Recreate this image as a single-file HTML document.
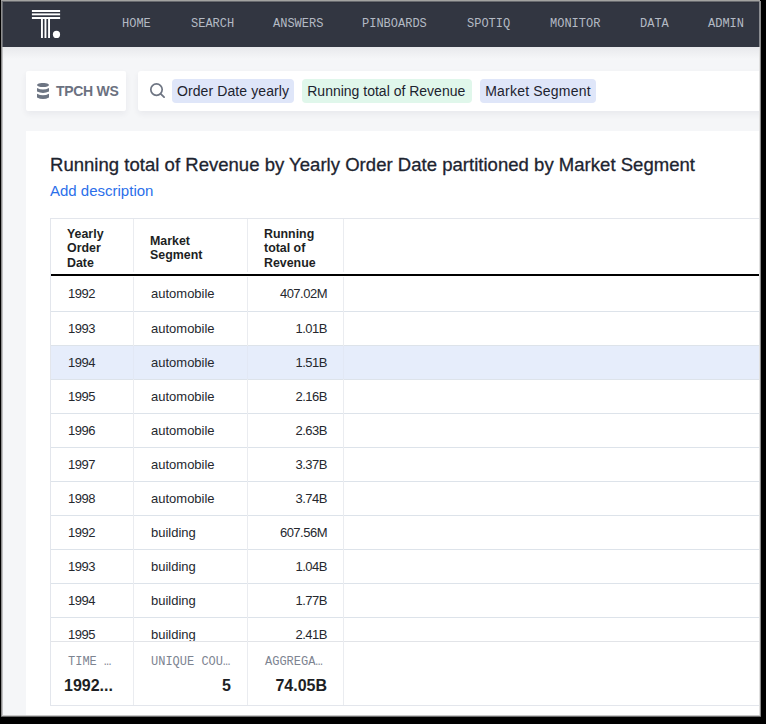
<!DOCTYPE html>
<html><head><meta charset="utf-8">
<style>
*{margin:0;padding:0;box-sizing:border-box}
html,body{width:766px;height:724px;overflow:hidden;background:#000}
body{position:relative;font-family:"Liberation Sans",sans-serif;color:#1d232f}
.abs{position:absolute}
#screen{position:absolute;left:1px;top:0;width:760px;height:717px;background:#a3a3a3;overflow:hidden}
#inner{position:absolute;left:1px;top:2px;width:757px;height:713px;background:#f5f6f8;overflow:hidden}
#nav{position:absolute;left:0;top:0;width:757px;height:44px;background:#323640}
.nv{position:absolute;top:15px;font-family:"Liberation Mono",monospace;font-size:12px;color:#b4bac4;letter-spacing:0px;line-height:14px}
.box{position:absolute;background:#fff;border-radius:2px;box-shadow:0 3px 6px rgba(30,40,60,.06)}
.tok{position:absolute;top:79px;height:24px;border-radius:4px;font-size:14px;line-height:24px;padding:0;text-align:center;color:#1d232f;white-space:nowrap}
#card{position:absolute;left:26px;top:131px;width:740px;height:600px;background:#fff}
table{border-collapse:collapse}
.grid{position:absolute;left:50px;top:218px;width:712px;height:488px;border:1px solid #e3e6ec;overflow:hidden;background:#fff}
.hdr{position:absolute;font-size:12.4px;font-weight:bold;line-height:14.6px;color:#1d1f24}
.cell{position:absolute;font-size:13px;color:#25282e;line-height:16px;white-space:nowrap}
.num{letter-spacing:-0.5px}
.hl{position:absolute;height:1px;background:#dde3ea}
.ft{position:absolute;top:655px;font-family:"Liberation Mono",monospace;font-size:12px;line-height:14px;color:#7d8491;white-space:nowrap}
.fv{position:absolute;top:677px;font-size:16px;font-weight:bold;line-height:18px;color:#1d1f24;white-space:nowrap}
.vl{position:absolute;width:1px;background:#eaecf0}
</style></head><body>
<div id="screen"><div id="inner"></div></div>

<!-- nav -->
<div class="abs" style="left:2px;top:2px;width:757px;height:45px;background:#323641"></div>
<div class="abs" style="left:2px;top:47px;width:757px;height:12px;background:linear-gradient(#e8e9ec,#f5f6f8)"></div>
<svg class="abs" style="left:31px;top:9px" width="30" height="30" viewBox="0 0 30 30">
  <rect x="0.9" y="1" width="28.2" height="2" fill="#fff"/>
  <rect x="0.9" y="4.4" width="28.2" height="1.9" fill="#fff"/>
  <rect x="0.9" y="8" width="28.2" height="2" fill="#fff"/>
  <rect x="10" y="9" width="1.9" height="20" fill="#fff"/>
  <rect x="13.5" y="9" width="1.9" height="20" fill="#fff"/>
  <rect x="17.1" y="9" width="1.9" height="20" fill="#fff"/>
  <circle cx="25.5" cy="25.4" r="3.6" fill="#fff"/>
</svg>
<div class="nv" style="left:122px;top:17px">HOME</div>
<div class="nv" style="left:191px;top:17px">SEARCH</div>
<div class="nv" style="left:273px;top:17px">ANSWERS</div>
<div class="nv" style="left:362px;top:17px">PINBOARDS</div>
<div class="nv" style="left:467px;top:17px">SPOTIQ</div>
<div class="nv" style="left:550px;top:17px">MONITOR</div>
<div class="nv" style="left:640px;top:17px">DATA</div>
<div class="nv" style="left:708px;top:17px">ADMIN</div>

<!-- source box -->
<div class="box" style="left:26px;top:71px;width:100px;height:40px"></div>
<svg class="abs" style="left:37px;top:83px" width="12" height="17" viewBox="0 0 12 17">
  <ellipse cx="6" cy="2" rx="6" ry="2.05" fill="#6d7583"/>
  <path d="M0 5 Q6 8 12 5 V8.6 Q6 11.2 0 8.6Z" fill="#6d7583"/>
  <path d="M0 10.8 Q6 13.8 12 10.8 V14.4 Q6 17.4 0 14.4Z" fill="#6d7583"/>
</svg>
<div class="abs" style="left:56px;top:83px;font-size:14px;font-weight:bold;color:#6b7180;line-height:16px;letter-spacing:-0.3px">TPCH WS</div>

<!-- search box -->
<div class="box" style="left:138px;top:71px;width:630px;height:40px;border-radius:3px 0 0 3px"></div>
<svg class="abs" style="left:149px;top:82px" width="18" height="18" viewBox="0 0 18 18">
  <circle cx="7.5" cy="7.6" r="5.7" fill="none" stroke="#6e7583" stroke-width="1.7"/>
  <line x1="11.7" y1="11.8" x2="15.1" y2="15.1" stroke="#6e7583" stroke-width="1.8" stroke-linecap="round"/>
</svg>
<div class="tok" style="left:172px;width:122px;letter-spacing:0.1px;background:#dfe6f9">Order Date yearly</div>
<div class="tok" style="left:302px;width:170px;padding-right:1.5px;background:#e0f7eb">Running total of Revenue</div>
<div class="tok" style="left:480px;width:116px;letter-spacing:0.2px;background:#dfe6f9">Market Segment</div>

<!-- card -->
<div class="abs" style="left:26px;top:131px;width:740px;height:600px;background:#fff"></div>
<div class="abs" style="left:50px;top:154px;font-size:18.5px;letter-spacing:0.03px;line-height:22px;color:#1d2430;-webkit-text-stroke:0.3px #1d2430;white-space:nowrap">Running total of Revenue by Yearly Order Date partitioned by Market Segment</div>
<div class="abs" style="left:50px;top:182px;font-size:15px;line-height:18px;color:#2b6fea;white-space:nowrap">Add description</div>

<!-- grid -->
<div id="grid"><div class="abs" style="left:50px;top:218px;width:716px;height:488px;background:#fff;border:1px solid #e3e6ec"></div>
<div class="abs" style="left:51px;top:345px;width:715px;height:34px;background:#e6edfb"></div>
<div class="hl" style="left:51px;top:311px;width:715px"></div>
<div class="hl" style="left:51px;top:345px;width:715px"></div>
<div class="hl" style="left:51px;top:379px;width:715px"></div>
<div class="hl" style="left:51px;top:413px;width:715px"></div>
<div class="hl" style="left:51px;top:447px;width:715px"></div>
<div class="hl" style="left:51px;top:481px;width:715px"></div>
<div class="hl" style="left:51px;top:515px;width:715px"></div>
<div class="hl" style="left:51px;top:549px;width:715px"></div>
<div class="hl" style="left:51px;top:583px;width:715px"></div>
<div class="hl" style="left:51px;top:617px;width:715px"></div>
<div class="cell num" style="left:68px;top:285.5px">1992</div>
<div class="cell" style="left:151px;top:285.5px">automobile</div>
<div class="cell num" style="left:227px;width:100px;text-align:right;top:285.5px">407.02M</div>
<div class="cell num" style="left:68px;top:320.5px">1993</div>
<div class="cell" style="left:151px;top:320.5px">automobile</div>
<div class="cell num" style="left:227px;width:100px;text-align:right;top:320.5px">1.01B</div>
<div class="cell num" style="left:68px;top:354.5px">1994</div>
<div class="cell" style="left:151px;top:354.5px">automobile</div>
<div class="cell num" style="left:227px;width:100px;text-align:right;top:354.5px">1.51B</div>
<div class="cell num" style="left:68px;top:388.5px">1995</div>
<div class="cell" style="left:151px;top:388.5px">automobile</div>
<div class="cell num" style="left:227px;width:100px;text-align:right;top:388.5px">2.16B</div>
<div class="cell num" style="left:68px;top:422.5px">1996</div>
<div class="cell" style="left:151px;top:422.5px">automobile</div>
<div class="cell num" style="left:227px;width:100px;text-align:right;top:422.5px">2.63B</div>
<div class="cell num" style="left:68px;top:456.5px">1997</div>
<div class="cell" style="left:151px;top:456.5px">automobile</div>
<div class="cell num" style="left:227px;width:100px;text-align:right;top:456.5px">3.37B</div>
<div class="cell num" style="left:68px;top:490.5px">1998</div>
<div class="cell" style="left:151px;top:490.5px">automobile</div>
<div class="cell num" style="left:227px;width:100px;text-align:right;top:490.5px">3.74B</div>
<div class="cell num" style="left:68px;top:524.5px">1992</div>
<div class="cell" style="left:151px;top:524.5px">building</div>
<div class="cell num" style="left:227px;width:100px;text-align:right;top:524.5px">607.56M</div>
<div class="cell num" style="left:68px;top:558.5px">1993</div>
<div class="cell" style="left:151px;top:558.5px">building</div>
<div class="cell num" style="left:227px;width:100px;text-align:right;top:558.5px">1.04B</div>
<div class="cell num" style="left:68px;top:592.5px">1994</div>
<div class="cell" style="left:151px;top:592.5px">building</div>
<div class="cell num" style="left:227px;width:100px;text-align:right;top:592.5px">1.77B</div>
<div class="cell num" style="left:68px;top:626.5px">1995</div>
<div class="cell" style="left:151px;top:626.5px">building</div>
<div class="cell num" style="left:227px;width:100px;text-align:right;top:626.5px">2.41B</div>
<div class="abs" style="left:51px;top:641px;width:715px;height:64px;background:#fff;border-top:1px solid #e2e4e8"></div>
<div class="vl" style="left:133px;top:219px;height:53px"></div>
<div class="vl" style="left:133px;top:277px;height:428px"></div>
<div class="abs" style="left:133px;top:346px;width:1px;height:33px;background:#e2e8f5"></div>
<div class="vl" style="left:247px;top:219px;height:53px"></div>
<div class="vl" style="left:247px;top:277px;height:428px"></div>
<div class="abs" style="left:247px;top:346px;width:1px;height:33px;background:#e2e8f5"></div>
<div class="vl" style="left:343px;top:219px;height:53px"></div>
<div class="vl" style="left:343px;top:277px;height:428px"></div>
<div class="abs" style="left:343px;top:346px;width:1px;height:33px;background:#e2e8f5"></div>
<div class="abs" style="left:51px;top:274px;width:715px;height:2px;background:#000"></div>
<div class="hdr" style="left:67px;top:226.5px">Yearly<br>Order<br>Date</div>
<div class="hdr" style="left:150px;top:233.5px">Market<br>Segment</div>
<div class="hdr" style="left:264px;top:226.5px">Running<br>total of<br>Revenue</div>
<div class="ft" style="left:68px">TIME …</div>
<div class="ft" style="left:151px">UNIQUE COU…</div>
<div class="ft" style="left:265px">AGGREGA…</div>
<div class="fv" style="left:64px">1992...</div>
<div class="fv" style="left:131px;width:100px;text-align:right">5</div>
<div class="fv" style="left:227px;width:100px;text-align:right">74.05B</div></div><!--/grid-->

<!-- frame overlay -->
<div class="abs" style="left:0;top:0;width:760px;height:1px;background:#a3a3a1"></div>
<div class="abs" style="left:2px;top:1px;width:758px;height:1px;background:#686a6f"></div>
<div class="abs" style="left:3px;top:2px;width:756px;height:1px;background:#2e313b"></div>
<div class="abs" style="left:0;top:0;width:1px;height:724px;background:#000"></div>
<div class="abs" style="left:1px;top:1px;width:1px;height:716px;background:#8c8c8c"></div>
<div class="abs" style="left:2px;top:47px;width:1px;height:669px;background:#c2c2c4"></div>
<div class="abs" style="left:2px;top:2px;width:1px;height:45px;background:#6a6d74"></div>
<div class="abs" style="left:759px;top:1px;width:1px;height:715px;background:#e0e0e0"></div>
<div class="abs" style="left:759px;top:1px;width:1px;height:46px;background:#8a8c91"></div>
<div class="abs" style="left:760px;top:1px;width:1px;height:716px;background:#8a8a8a"></div>
<div class="abs" style="left:761px;top:0;width:5px;height:724px;background:#000"></div>
<div class="abs" style="left:760px;top:0;width:6px;height:1px;background:#000"></div>
<div class="abs" style="left:2px;top:715px;width:758px;height:1px;background:#c8c8c8"></div>
<div class="abs" style="left:1px;top:716px;width:760px;height:1px;background:#6a6a6a"></div>
<div class="abs" style="left:0;top:717px;width:766px;height:7px;background:#000"></div>
</body></html>
